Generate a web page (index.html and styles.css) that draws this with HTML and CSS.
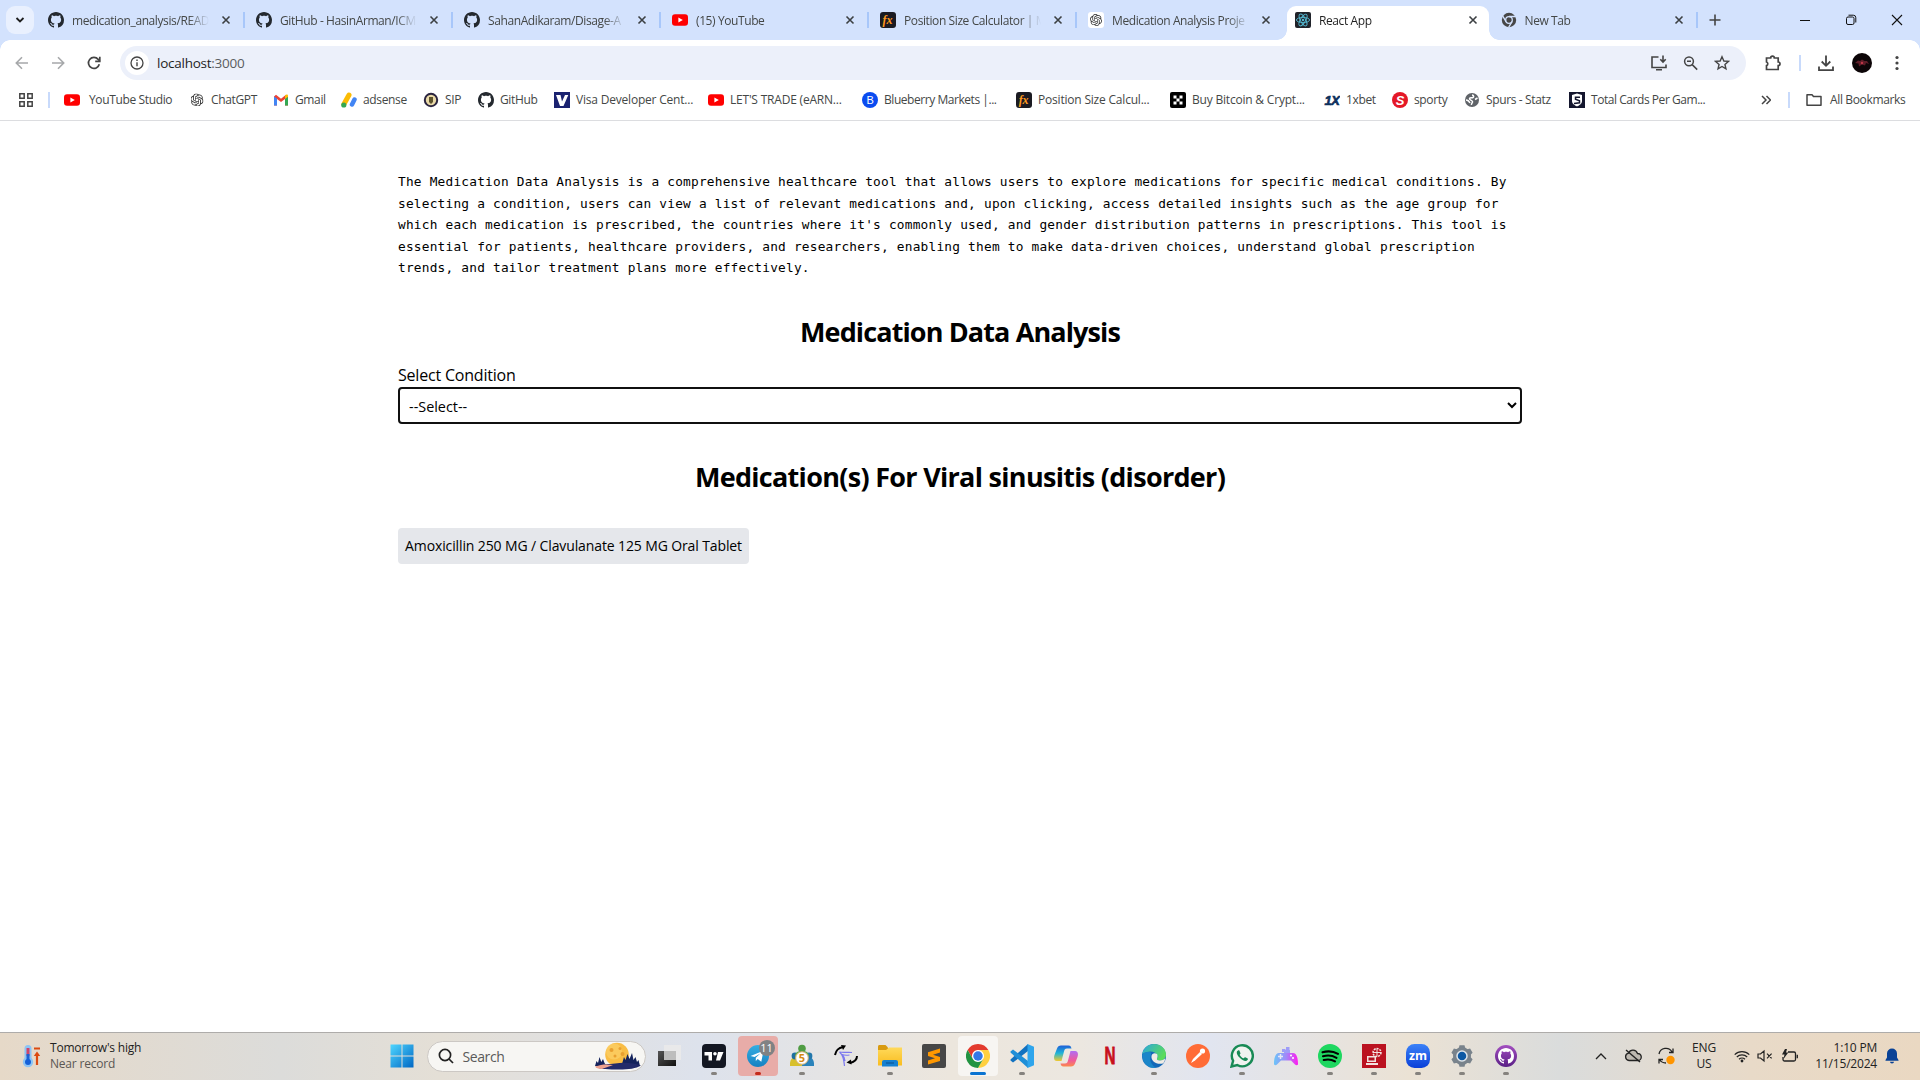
FILE: index.html
```html
<!DOCTYPE html>
<html lang="en"><head><meta charset="utf-8"><title>React App</title>
<link rel="stylesheet" href="styles.css"></head>
<body>
<svg class="defs" aria-hidden="true">
<defs>
<linearGradient id="g-win" x1="0" y1="0" x2="1" y2="1"><stop offset="0" stop-color="#4fd6ff"/><stop offset="1" stop-color="#0067c4"/></linearGradient>
<linearGradient id="g-tg" x1="0" y1="0" x2="0" y2="1"><stop offset="0" stop-color="#37aee2"/><stop offset="1" stop-color="#1681c2"/></linearGradient>
<linearGradient id="g-pad" x1="0" y1="0" x2="1" y2="0"><stop offset="0" stop-color="#6cc4f8"/><stop offset=".5" stop-color="#a08af8"/><stop offset="1" stop-color="#ff1cf0"/></linearGradient>
<linearGradient id="g-edge" x1="0" y1="0" x2="1" y2=".5"><stop offset="0" stop-color="#2aa6e0"/><stop offset="1" stop-color="#5bdc5a"/></linearGradient>
<linearGradient id="g-zm" x1="0" y1="0" x2="0" y2="1"><stop offset="0" stop-color="#3b82f8"/><stop offset="1" stop-color="#0a3fd8"/></linearGradient>
<linearGradient id="g-task" x1="0" y1="0" x2="1" y2="1"><stop offset="0" stop-color="#555"/><stop offset="1" stop-color="#111"/></linearGradient>
<linearGradient id="g-cp1" x1="0" y1="0" x2="0" y2="1"><stop offset="0" stop-color="#1f5fd8"/><stop offset=".5" stop-color="#1fb5d8"/><stop offset="1" stop-color="#f3c92c"/></linearGradient>
<linearGradient id="g-cp2" x1="0" y1="0" x2="0" y2="1"><stop offset="0" stop-color="#b06cf4"/><stop offset=".6" stop-color="#f05a9a"/><stop offset="1" stop-color="#fb8a4c"/></linearGradient>
<linearGradient id="g-gh" x1="0" y1="0" x2="0" y2="1"><stop offset="0" stop-color="#a34fc0"/><stop offset="1" stop-color="#5a1f86"/></linearGradient>
<linearGradient id="g-folder" x1="0" y1="0" x2="0" y2="1"><stop offset="0" stop-color="#ffd95a"/><stop offset="1" stop-color="#f9bd20"/></linearGradient>
<symbol id="github" viewBox="0 0 16 16"><path d="M8 0C3.58 0 0 3.58 0 8c0 3.54 2.29 6.53 5.47 7.59.4.07.55-.17.55-.38 0-.19-.01-.82-.01-1.49-2.01.37-2.53-.49-2.69-.94-.09-.23-.48-.94-.82-1.13-.28-.15-.68-.52-.01-.53.63-.01 1.08.58 1.23.82.72 1.21 1.87.87 2.33.66.07-.52.28-.87.51-1.07-1.78-.2-3.64-.89-3.64-3.95 0-.87.31-1.59.82-2.15-.08-.2-.36-1.02.08-2.12 0 0 .67-.21 2.2.82.64-.18 1.32-.27 2-.27s1.36.09 2 .27c1.53-1.04 2.2-.82 2.2-.82.44 1.1.16 1.92.08 2.12.51.56.82 1.27.82 2.15 0 3.07-1.87 3.75-3.65 3.95.29.25.54.73.54 1.48 0 1.07-.01 1.93-.01 2.2 0 .21.15.46.55.38A8.01 8.01 0 0 0 16 8c0-4.42-3.58-8-8-8z"/></symbol>
<symbol id="youtube" viewBox="0 0 16 16"><rect y="2.2" width="16" height="11.6" rx="3" fill="#f00"/><path d="M6.4 5.4v5.2L10.8 8z" fill="#fff"/></symbol>
<symbol id="openai" viewBox="0 0 24 24"><path d="M22.2819 9.8211a5.9847 5.9847 0 0 0-.5157-4.9108 6.0462 6.0462 0 0 0-6.5098-2.9A6.0651 6.0651 0 0 0 4.9807 4.1818a5.9847 5.9847 0 0 0-3.9977 2.9 6.0462 6.0462 0 0 0 .7427 7.0966 5.98 5.98 0 0 0 .511 4.9107 6.051 6.051 0 0 0 6.5146 2.9001A5.9847 5.9847 0 0 0 13.2599 24a6.0557 6.0557 0 0 0 5.7718-4.2058 5.9894 5.9894 0 0 0 3.9977-2.9001 6.0557 6.0557 0 0 0-.7475-7.0729zm-9.022 12.6081a4.4755 4.4755 0 0 1-2.8764-1.0408l.1419-.0804 4.7783-2.7582a.7948.7948 0 0 0 .3927-.6813v-6.7369l2.02 1.1686a.071.071 0 0 1 .038.052v5.5826a4.504 4.504 0 0 1-4.4945 4.4944zm-9.6607-4.1254a4.4708 4.4708 0 0 1-.5346-3.0137l.142.0852 4.783 2.7582a.7712.7712 0 0 0 .7806 0l5.8428-3.3685v2.3324a.0804.0804 0 0 1-.0332.0615L9.74 19.9502a4.4992 4.4992 0 0 1-6.1408-1.6464zM2.3408 7.8956a4.485 4.485 0 0 1 2.3655-1.9728V11.6a.7664.7664 0 0 0 .3879.6765l5.8144 3.3543-2.0201 1.1685a.0757.0757 0 0 1-.071 0l-4.8303-2.7865A4.504 4.504 0 0 1 2.3408 7.872zm16.5963 3.8558L13.1038 8.364 15.1192 7.2a.0757.0757 0 0 1 .071 0l4.8303 2.7913a4.4944 4.4944 0 0 1-.6765 8.1042v-5.6772a.79.79 0 0 0-.407-.667zm2.0107-3.0231l-.142-.0852-4.7735-2.7818a.7759.7759 0 0 0-.7854 0L9.409 9.2297V6.8974a.0662.0662 0 0 1 .0284-.0615l4.8303-2.7866a4.4992 4.4992 0 0 1 6.6802 4.66zM8.3065 12.863l-2.02-1.1638a.0804.0804 0 0 1-.038-.0567V6.0742a4.4992 4.4992 0 0 1 7.3757-3.4537l-.142.0805L8.704 5.459a.7948.7948 0 0 0-.3927.6813zm1.0976-2.3654l2.602-1.4998 2.6069 1.4998v2.9994l-2.5974 1.4997-2.6067-1.4997Z"/></symbol>
<symbol id="fx" viewBox="0 0 16 16"><rect width="16" height="16" rx="3" fill="#1b1b22"/><text x="7.6" y="12" text-anchor="middle" class="fx-text">fx</text></symbol>
<symbol id="close" viewBox="0 0 10 10"><path d="M1.5 1.5l7 7M8.5 1.5l-7 7" stroke="currentColor" stroke-width="1.6" fill="none"/></symbol>
<symbol id="chrome" viewBox="0 0 48 48"><circle cx="24" cy="24" r="12" fill="#fff"/><path fill="#e33b2e" d="M24,12H44.78a23.99,23.99,0,0,0-41.56,0L13.61,30A11.99,11.99,0,0,1,24,12Z"/><path fill="#ffd040" d="M34.39,30,24,48A23.99,23.99,0,0,0,44.78,12H24A11.99,11.99,0,0,1,34.39,30Z"/><path fill="#229342" d="M13.61,30,3.22,12A23.99,23.99,0,0,0,24,48L34.39,30A11.99,11.99,0,0,1,13.61,30Z"/><circle cx="24" cy="24" r="9.5" fill="#3178e8"/></symbol>
</defs></svg>

<div class="browser">
<header class="tabstrip">
  <div class="tab-search"><svg width="10" height="10" viewBox="0 0 10 10"><path d="M1.500 3L5 6.500 8.500 3" fill="none" stroke="#1f1f1f" stroke-width="1.800"/></svg></div>
  <div class="tab"><svg class="fav dark"><use href="#github"/></svg><span class="title">medication_analysis/READ</span><svg class="x"><use href="#close"/></svg></div>
  <div class="tab"><svg class="fav dark"><use href="#github"/></svg><span class="title">GitHub - HasinArman/ICM</span><svg class="x"><use href="#close"/></svg></div>
  <div class="tab"><svg class="fav dark"><use href="#github"/></svg><span class="title">SahanAdikaram/Disage-A</span><svg class="x"><use href="#close"/></svg></div>
  <div class="tab"><svg class="fav"><use href="#youtube"/></svg><span class="title">(15) YouTube</span><svg class="x"><use href="#close"/></svg></div>
  <div class="tab"><svg class="fav"><use href="#fx"/></svg><span class="title">Position Size Calculator | M</span><svg class="x"><use href="#close"/></svg></div>
  <div class="tab last"><svg class="fav gpt-tab"><use href="#openai"/></svg><span class="title">Medication Analysis Proje</span><svg class="x"><use href="#close"/></svg></div>
  <div class="tab active"><svg class="fav" viewBox="0 0 16 16"><rect width="16" height="16" rx="2" fill="#20232a"/><g fill="none" stroke="#53b8d0" stroke-width=".9"><ellipse cx="8" cy="8" rx="6.6" ry="2.6"/><ellipse cx="8" cy="8" rx="6.6" ry="2.6" transform="rotate(60 8 8)"/><ellipse cx="8" cy="8" rx="6.6" ry="2.6" transform="rotate(120 8 8)"/></g><circle cx="8" cy="8" r="1.2" fill="#53b8d0"/></svg><span class="title">React App</span><svg class="x"><use href="#close"/></svg></div>
  <div class="tab"><svg class="fav" viewBox="0 0 16 16"><circle cx="8" cy="8" r="7.200" fill="#474747"/><circle cx="8" cy="8" r="3.300" fill="none" stroke="#d3e2fd" stroke-width="1.300"/><path d="M8 4.500h7M5 9.700L1.500 3.700M11 9.700L7.600 15.400" stroke="#d3e2fd" stroke-width="1.300"/></svg><span class="title">New Tab</span><svg class="x"><use href="#close"/></svg></div>
  <svg class="plus" width="12" height="12" viewBox="0 0 12 12"><path d="M6 .5v11M.5 6h11" stroke="#444" stroke-width="1.600"/></svg>
  <div class="window-controls">
    <svg width="12" height="12" viewBox="0 0 12 12"><path d="M1 6.500h10" stroke="#111"/></svg>
    <svg width="12" height="12" viewBox="0 0 12 12" fill="none" stroke="#111"><rect x="1.500" y="3" width="7.500" height="7.500" rx="1.500"/><path d="M3.500 1.200h4.800a2.500 2.500 0 0 1 2.500 2.500v4.800"/></svg>
    <svg width="12" height="12" viewBox="0 0 12 12"><path d="M1 1l10 10M11 1L1 11" stroke="#111" stroke-width="1.100"/></svg>
  </div>
</header>

<nav class="toolbar">
  <div class="nav-buttons">
    <svg width="14" height="14" viewBox="0 0 14 14" fill="none" stroke="#a6a8aa" stroke-width="1.600"><path d="M13 7H1.500M7 1.300L1.300 7 7 12.700"/></svg>
    <svg width="14" height="14" viewBox="0 0 14 14" fill="none" stroke="#a6a8aa" stroke-width="1.600"><path d="M1 7h11.500M7 1.300L12.700 7 7 12.700"/></svg>
    <svg width="14" height="14" viewBox="0 0 14 14" fill="none" stroke="#444" stroke-width="1.700"><path d="M12.300 8.300A5.500 5.500 0 1 1 11.200 3.400L12.700 5"/><path d="M12.800.8v4.600H8.200"/></svg>
  </div>
  <div class="omnibox">
    <span class="info"><svg width="14" height="14" viewBox="0 0 14 14"><circle cx="7" cy="7" r="6" fill="none" stroke="#444" stroke-width="1.300"/><path d="M7 6.200v4M7 3.500v1.500" stroke="#444" stroke-width="1.400"/></svg></span>
    <span class="url">localhost<i>:3000</i></span>
    <div class="omni-actions">
      <svg width="18" height="18" viewBox="0 0 18 18" fill="none" stroke="#444" stroke-width="1.600"><path d="M8.500 3H2v10.500h14V10.500M6 15.700h6M13 1.500v6M10.300 5.200L13 8l2.700-2.800"/></svg>
      <svg width="16" height="16" viewBox="0 0 16 16" fill="none" stroke="#444" stroke-width="1.500"><circle cx="6" cy="6.300" r="4.400"/><path d="M9.200 9.600l5 5M4 6.300h4"/></svg>
      <svg width="16" height="16" viewBox="0 0 16 16" fill="none" stroke="#444" stroke-width="1.400"><path d="M8 1.800l1.850 4.200 4.500.4-3.400 3 1 4.500L8 11.500l-3.950 2.400 1-4.500-3.400-3 4.500-.4z"/></svg>
    </div>
  </div>
  <div class="tool-actions">
    <svg width="18" height="18" viewBox="0 0 18 18" fill="none" stroke="#444" stroke-width="1.700"><path d="M2.500 4h4.200a1.800 1.800 0 0 1 3.600 0h3.900v4a1.800 1.800 0 0 1 0 3.600v3.900H2.500v-3.900a1.900 1.900 0 0 0 0-3.600z"/></svg>
    <span class="divider"></span>
    <svg width="18" height="18" viewBox="0 0 18 18" fill="none" stroke="#444" stroke-width="1.800"><path d="M9 1.500v10M4.700 7.500L9 11.800l4.300-4.300M2 12.500v3.600h14v-3.600"/></svg>
    <svg width="20" height="20" viewBox="0 0 20 20"><circle cx="10" cy="10" r="10" fill="#0c0507"/><path d="M3 10l3-2.500 2 .5 2-1.500 2.500 1.500L15 8l2 3-3-1-1 2.500-3-1-3 2-.5-3z" fill="#5f1d28"/><circle cx="10" cy="10" r="1.200" fill="#c03848"/></svg>
    <svg width="4" height="16" viewBox="0 0 4 16" fill="#444"><circle cx="2" cy="2.500" r="1.600"/><circle cx="2" cy="8" r="1.600"/><circle cx="2" cy="13.500" r="1.600"/></svg>
  </div>
</nav>

<nav class="bookmarks">
  <svg class="apps" width="16" height="16" viewBox="0 0 16 16" fill="none" stroke="#444" stroke-width="1.500"><path d="M1.800 1.800h4.400v4.400H1.800zM9.800 1.800h4.400v4.400H9.800zM1.800 9.800h4.400v4.400H1.800zM9.800 9.800h4.400v4.400H9.800z"/></svg>
  <span class="divider"></span>
  <a class="wide"><svg class="fav"><use href="#youtube"/></svg><span>YouTube Studio</span></a>
  <a><svg class="fav gpt"><use href="#openai"/></svg><span>ChatGPT</span></a>
  <a><svg class="fav" viewBox="0 0 16 16"><path d="M1 4.500v9h3V7l4 3 4-3v6.500h3v-9L13 2.800 8 6.700 3 2.800z" fill="#ea4335"/><path d="M1 4.500v9h3V6.500z" fill="#4285f4"/><path d="M15 4.500v9h-3V6.500z" fill="#34a853"/><path d="M12 3.600V7l3-2.300V4c0-1.600-1.600-2-3-.4z" fill="#fbbc04"/></svg><span>Gmail</span></a>
  <a><svg class="fav" viewBox="0 0 16 16"><path d="M8 3L3 12" stroke="#fbbc04" stroke-width="5" stroke-linecap="round"/><path d="M13.500 7.500L11 12.500" stroke="#4285f4" stroke-width="4.500" stroke-linecap="round"/><circle cx="2.800" cy="13" r="2.600" fill="#34a853"/></svg><span>adsense</span></a>
  <a><svg class="fav" viewBox="0 0 16 16"><circle cx="8" cy="8" r="6.200" fill="#e9d9a8" stroke="#2b2540" stroke-width="2"/><path d="M6 5h4v5l-2 2-2-2z" fill="#5c522c"/></svg><span>SIP</span></a>
  <a><svg class="fav dark"><use href="#github"/></svg><span>GitHub</span></a>
  <a class="long"><svg class="fav" viewBox="0 0 16 16"><path d="M0 0h16v16H0z" fill="#1a2270"/><path d="M2 3h4.500L8 9.500 11 3h3.300L9.500 14H6z" fill="#fff"/></svg><span>Visa Developer Cent...</span></a>
  <a class="long"><svg class="fav"><use href="#youtube"/></svg><span>LET'S TRADE (eARN...</span></a>
  <a class="tight"><svg class="fav" viewBox="0 0 16 16"><circle cx="8" cy="8" r="8" fill="#0a4bf0"/><text x="8" y="12" text-anchor="middle" class="b-text">B</text></svg><span>Blueberry Markets |...</span></a>
  <a class="long"><svg class="fav"><use href="#fx"/></svg><span>Position Size Calcul...</span></a>
  <a class="long"><svg class="fav" viewBox="0 0 16 16"><rect width="16" height="16" rx="2" fill="#000"/><path d="M3.500 3.500h3v3h-3zM9.500 3.500h3v3h-3zM6.500 6.500h3v3h-3zM3.500 9.500h3v3h-3zM9.500 9.500h3v3h-3z" fill="#fff"/></svg><span>Buy Bitcoin &amp; Crypt...</span></a>
  <a><svg class="fav" viewBox="0 0 16 16"><text x="8" y="12.500" text-anchor="middle" class="xbet-text" textLength="15" lengthAdjust="spacingAndGlyphs">1X</text></svg><span>1xbet</span></a>
  <a><svg class="fav" viewBox="0 0 16 16"><circle cx="8" cy="8" r="8" fill="#e41827"/><text x="8" y="12.500" text-anchor="middle" class="s-text">S</text></svg><span>sporty</span></a>
  <a><svg class="fav" viewBox="0 0 16 16"><circle cx="8" cy="8" r="7" fill="#5f6368"/><path d="M8 3c2 0 2 2 1 2.500S6 5 5.500 6.500 8 8 8.500 9.500 7 11 7.500 13M2 8c2 0 3 1 4 3M13.500 6L11 7.500" stroke="#fff" stroke-width="1.500" fill="none"/></svg><span>Spurs - Statz</span></a>
  <a class="tight"><svg class="fav" viewBox="0 0 16 16"><path d="M0 0h16v16H0z" fill="#14162e"/><path d="M3 3l5-1.500L13 3v6c0 3-3 4.500-5 5.500-2-1-5-2.500-5-5.500z" fill="#fff"/><path d="M11 5.300H6.500v2l4 1.500v2L5 11.500" fill="none" stroke="#14162e" stroke-width="1.500"/></svg><span>Total Cards Per Gam...</span></a>
  <svg class="more" width="10" height="10" viewBox="0 0 10 10" fill="none" stroke="#444" stroke-width="1.500"><path d="M1 1l4 4-4 4M5.500 1l4 4-4 4"/></svg>
  <span class="divider"></span>
  <a><svg class="fav" viewBox="0 0 16 16"><path d="M1 13.300V2.700h5l1.500 1.800H15v8.800z" fill="none" stroke="#444" stroke-width="1.500" stroke-linejoin="round"/></svg><span>All Bookmarks</span></a>
</nav>

<main class="page">
  <div class="container">
    <p class="intro">The Medication Data Analysis is a comprehensive healthcare tool that allows users to explore medications for specific medical conditions. By selecting a condition, users can view a list of relevant medications and, upon clicking, access detailed insights such as the age group for which each medication is prescribed, the countries where it's commonly used, and gender distribution patterns in prescriptions. This tool is essential for patients, healthcare providers, and researchers, enabling them to make data-driven choices, understand global prescription trends, and tailor treatment plans more effectively.</p>
    <h1>Medication Data Analysis</h1>
    <label for="condition">Select Condition</label>
    <select id="condition"><option>--Select--</option></select>
    <h2>Medication(s) For Viral sinusitis (disorder)</h2>
    <button class="med">Amoxicillin 250 MG / Clavulanate 125 MG Oral Tablet</button>
  </div>
</main>
</div>

<footer class="taskbar">
  <div class="weather">
    <svg width="20" height="24" viewBox="0 0 20 24"><rect x="3.500" y="1" width="7" height="17" rx="3.500" fill="#8cc4f5"/><circle cx="7" cy="18" r="5.200" fill="#8cc4f5"/><path d="M7 4v8" stroke="#d04468" stroke-width="3"/><path d="M7 10v7" stroke="#1f60d0" stroke-width="3"/><circle cx="7" cy="18" r="3" fill="#1560d8"/><path d="M13 4.500h6M16 21V9" stroke="#dc4a10" stroke-width="2.200"/><path d="M12.800 12L16 7.500l3.200 4.500z" fill="#dc4a10"/></svg>
    <div><b>Tomorrow's high</b><em>Near record</em></div>
  </div>
  <div class="apps-row">
    <svg class="win" viewBox="0 0 24 24"><path fill="url(#g-win)" d="M.5.500h11v11H.5zM12.500.500h11v11h-11zM.5 12.500h11v11H.5zM12.500 12.500h11v11h-11z"/></svg>
    <div class="search"><svg width="16" height="16" viewBox="0 0 16 16" fill="none" stroke="#222" stroke-width="1.700"><circle cx="7" cy="7" r="5.600"/><path d="M11 11l4 4"/></svg><span>Search</span>
      <svg class="moon" width="46" height="28" viewBox="0 0 46 28"><circle cx="22" cy="12.500" r="11.800" fill="#f9bd45"/><circle cx="19" cy="9.500" r="8" fill="#fcd068" opacity=".7"/><g fill="#e9a030"><circle cx="16.500" cy="8" r="2"/><circle cx="25" cy="6.500" r="1.500"/><circle cx="20" cy="14" r="1.500"/><circle cx="27.500" cy="12" r="2"/></g><path d="M0 24l1.500-5 1.500 2 1.500-6 1.800 5 1.700-3 1.500 4 2 3zM27 22l2-7 1.500 3 2-6 2 5 2.500-6 1.500 7 2-3 1.500 5 1.500-2 1.500 6z" fill="#15235c"/><path d="M1 25c7-3.500 13-2.500 19-3.500 10-1.500 18-.5 26 2-5 3-12 4-22 4s-19 0-23-2.500z" fill="#232b6a"/><path d="M0 24.500c7-2.500 12-2.500 18-1.500-3 1.500-8 2.500-11 4-4 0-6-1-7-2.500z" fill="#efa28e"/></svg></div>
    <div class="app"><svg viewBox="0 0 24 24"><path fill="url(#g-task)" d="M0 7h18v15H0z"/><path fill="#e9e9ea" d="M6 1h17v15H6z"/><path fill="#bdbdbd" d="M6 7h12v9H6z"/></svg></div>
    <div class="app run"><svg viewBox="0 0 24 24"><rect width="24" height="24" rx="4" fill="#131722"/><path fill="#fff" d="M2.500 8h7.500v8.500H6.500v-5h-4zM16 8h5.500L18 16.500h-4z"/><circle cx="13" cy="9.800" r="1.800" fill="#fff"/></svg></div>
    <div class="app run tg"><svg viewBox="0 0 24 24"><circle cx="12" cy="12" r="11" fill="url(#g-tg)"/><path d="M4.500 12l13-5.300-2.200 11-3.600-2.700-1.900 1.900v-3.200l4.500-4.300-5.800 3.700z" fill="#fff"/></svg><span class="badge">11</span></div>
    <div class="app run"><svg viewBox="0 0 24 24"><path d="M0 22c-.5-6 2-9 6-9s6 3 6 9z" fill="#d8c02c"/><path d="M12 22c0-6 2-9 6-9s6.500 3 6 9z" fill="#2a83bb"/><circle cx="5" cy="12" r="3.400" fill="#1e70a0"/><circle cx="19" cy="12" r="3.400" fill="#2377ac"/><path d="M5 12c0-7 14-7 14 0z" fill="#5eaa4e"/><circle cx="12" cy="4.500" r="3.800" fill="#4f9c43"/><circle cx="12" cy="14" r="6.300" fill="#fff" stroke="#d5b070"/><text x="12" y="18.200" text-anchor="middle" class="five">5</text></svg></div>
    <div class="app"><svg viewBox="0 0 24 24"><path d="M1 11c1-5 3-7 8-8" stroke="#000" stroke-width="2" fill="none"/><path d="M7 1l5 .5-3 4.500z"/><path d="M23 12c0 4-3 6-7 7" stroke="#000" stroke-width="2" fill="none"/><path d="M17 15.500l-4.500 3 5 2z"/><path d="M18 8.500c-5-.5-9 .5-12.500-.5C9 11 10 15 10.500 22M15.500 11c-3.500.5-5 .5-7.500-.5 2.500 2.500 3 4 3 6.500" stroke="#7b78ee" stroke-width="1.200" fill="none"/></svg></div>
    <div class="app run"><svg viewBox="0 0 24 24"><path d="M0 2.500C0 1.600.6 1 1.500 1h6L10 3.500V6H0z" fill="#d99b10"/><path d="M0 6h8l3-2.500h13V21.500H0z" fill="url(#g-folder)"/><path d="M4 22.500V18a2 2 0 0 1 2-2h12a2 2 0 0 1 2 2v4.500z" fill="#1580d0"/><path d="M8 19h8" stroke="#0d5ca0" stroke-width="1.400"/></svg></div>
    <div class="app"><svg viewBox="0 0 24 24"><rect width="24" height="24" rx="2" fill="#474747"/><path d="M6 8.200L18 4.500v4L11 10.700l7 2.200v4L6 20.500v-4l7-2.200-7-2.200z" fill="#ff9800"/></svg></div>
    <div class="app run current"><svg><use href="#chrome"/></svg></div>
    <div class="app run"><svg viewBox="0 0 24 24"><path d="M18 0v7L3 18.500 0.500 16.500v-1z" fill="#1272c0"/><path d="M18 24v-7L3 5.500.5 7.500v1z" fill="#1f8fd8"/><path d="M17.500 0L24 2.800v18.400L17.500 24z" fill="#2fa5ec"/></svg></div>
    <div class="app"><svg viewBox="0 0 24 24"><path d="M7 1.500h7.500c2 0 2.500 1 3 3H13c-2 0-2.500 1-3 3L7.500 17H3c-3 0-3.500-3-2.500-6L3 4.500C3.700 2.500 5 1.500 7 1.500z" fill="url(#g-cp1)"/><path d="M17 22.500H9.500c-2 0-2.500-1-3-3H11c2 0 2.500-1 3-3L16.500 7H21c3 0 3.500 3 2.500 6L21 19.500c-.7 2-2 3-4 3z" fill="url(#g-cp2)"/></svg></div>
    <div class="app"><svg viewBox="0 0 24 24"><text x="12" y="20" text-anchor="middle" class="n-text" textLength="11" lengthAdjust="spacingAndGlyphs">N</text></svg></div>
    <div class="app run"><svg viewBox="0 0 24 24"><circle cx="12" cy="12" r="12" fill="#1468b8"/><path d="M.2 10C1.500 4 6 0 12 0c7 0 12 5 12 10.500 0 4-3 6-6 6-2.500 0-3.500-1-3-2 .7-1 1-2 0-4-1.500-2.500-7-5-14.800-.5z" fill="url(#g-edge)"/><path d="M9 11c-2 5 0 10 5 12.800C5 25 .5 18 .2 12 0 9 5 7 9 8.500z" fill="#1e93d0" opacity=".7"/><path d="M9.500 12c.5-2.500 3-3.500 5.500-2 .8 1.200.8 3 0 4.500-.5 1 .5 2 3 2 2 0 3.700-.8 4.800-2 .5 1.500-.2 3.500-1.800 5-3 .5-7 .5-9.500-2-1.500-1.500-2.300-3.500-2-5.500z" fill="#f0ece5"/></svg></div>
    <div class="app"><svg viewBox="0 0 24 24"><circle cx="12" cy="12" r="12" fill="#ff6c37"/><circle cx="16.500" cy="7" r="2.600" fill="#fff"/><path d="M14 8l2 2-7 6.500-4 2.500 2-4z" fill="#fff"/></svg></div>
    <div class="app run"><svg viewBox="0 0 24 24"><path d="M1.500 22.500l1.600-5.700A10.500 10.500 0 1 1 7.300 21z" fill="#f0f3ef" stroke="#188a55" stroke-width="2.400"/><path d="M8 6.500c-2 1-1.500 4 1.500 7s6.500 4.500 8 2.500c.7-1 .4-1.500-.2-1.800l-2-1c-1-.3-1.200 1.200-2 1-1.600-.6-3-2-3.600-3.500.8-.9 1-1 .6-1.900l-.8-2c-.3-.6-1-.6-1.500-.3z" fill="#188a55"/></svg></div>
    <div class="app"><svg viewBox="0 0 24 24"><path d="M5 9h14c4 0 5 6 5 11 0 1.500-2 1.500-3 .5l-4-4H7l-4 4c-1 1-3 1-3-.5C0 15 1 9 5 9z" fill="url(#g-pad)"/><path d="M8 5h3.500v3H8zM12 3h3.500v3H12zM10 6h6v3h-6z" fill="#9e9df8"/><path d="M4 12.500h5M6.500 10v5" stroke="#e7e7f3" stroke-width="1.500"/><circle cx="17" cy="11.500" r="1" fill="#fff"/><circle cx="19" cy="14" r="1" fill="#fff"/></svg></div>
    <div class="app run"><svg viewBox="0 0 24 24"><circle cx="12" cy="12" r="12" fill="#1ed760"/><path d="M4.500 8.300c5-1.500 11-1 15.500 1.500M5 12.300c4.500-1.300 9.500-.8 13.500 1.500M5.700 16c4-1 8-.6 11.300 1.300" stroke="#000" stroke-width="2.100" stroke-linecap="round" fill="none"/></svg></div>
    <div class="app run"><svg viewBox="0 0 24 24"><path d="M0 0h24v24H0z" fill="#bb1220"/><path d="M5 12h9v6H5zM4 19h12v2H4z" fill="#f3e1df"/><path d="M6.500 13.500h6v3h-6z" fill="#b01020"/><circle cx="15" cy="8.500" r="4" fill="none" stroke="#f3e1df" stroke-width="1.500" stroke-dasharray="2 1"/><path d="M15 4.500v8M11 8.500h8" stroke="#f3e1df"/></svg></div>
    <div class="app run"><svg viewBox="0 0 24 24"><rect width="24" height="24" rx="8.500" fill="url(#g-zm)"/><text x="12" y="15.500" text-anchor="middle" class="zm" textLength="18" lengthAdjust="spacingAndGlyphs">zm</text></svg></div>
    <div class="app run"><svg viewBox="0 0 24 24"><g fill="#79838c"><circle cx="12" cy="12" r="9"/><path id="tooth" d="M9.500 1.200h5l1 4h-7zM9.500 22.800h5l1-4h-7z"/><use href="#tooth" transform="rotate(60 12 12)"/><use href="#tooth" transform="rotate(120 12 12)"/></g><circle cx="12" cy="12" r="5" fill="#0c58a4" stroke="#dfe5ea" stroke-width="1.500"/></svg></div>
    <div class="app run"><svg viewBox="0 0 24 24"><circle cx="12" cy="12" r="11" fill="url(#g-gh)"/><svg x="4" y="4" width="16" height="16" fill="#fff"><use href="#github"/></svg></svg></div>
  </div>
  <div class="tray">
    <svg class="chev" width="12" height="12" viewBox="0 0 12 12" fill="none" stroke="#222" stroke-width="1.300"><path d="M1 9l5-5 5 5"/></svg>
    <svg class="cloud" width="18" height="14" viewBox="0 0 18 14"><path d="M5 11.500a3.700 3.700 0 0 1-.5-7.300 4.800 4.800 0 0 1 9 .3 3.500 3.500 0 0 1 .5 7z" fill="#bdb8b0" stroke="#222" stroke-width="1.300"/><path d="M2 1l14 12" stroke="#222" stroke-width="1.400"/></svg>
    <svg class="sync" width="18" height="18" viewBox="0 0 18 18" fill="none" stroke="#222" stroke-width="1.300"><path d="M2 7a7 7 0 0 1 13-2M16 1.500V5.500h-4M9 16c-3 0-5-1-6.500-3.500M2 16.500V12.500h4"/><circle cx="13.500" cy="13" r="4.200" fill="#ff9500" stroke="none"/></svg>
    <div class="lang"><span>ENG</span><span>US</span></div>
    <svg class="wifi" width="16" height="14" viewBox="0 0 16 14" fill="none" stroke="#222" stroke-width="1.200"><path d="M.7 5.700a10.300 10.300 0 0 1 14.600 0M2.800 8a7.300 7.300 0 0 1 10.400 0M5 10.300a4.300 4.300 0 0 1 6 0"/><circle cx="8" cy="12" r="1.400" fill="#222" stroke="none"/></svg>
    <svg class="vol" width="16" height="14" viewBox="0 0 16 14" fill="none" stroke="#222" stroke-width="1.200"><path d="M1 5v4h2.500L7 12V2L3.500 5zM10 4.700l4.600 4.600M14.600 4.700L10 9.300"/></svg>
    <svg class="bat" width="18" height="16" viewBox="0 0 18 16" fill="none" stroke="#222" stroke-width="1.300"><path d="M7 4h6a1.500 1.500 0 0 1 1.500 1.500v6a1.500 1.500 0 0 1-1.500 1.500H3.500A1.500 1.500 0 0 1 2 11.500V9M16.300 6.800v3.400"/><path d="M4 1L1 6.500h2.500L2.500 11l4.800-6.500H5L6 1z" fill="#222" stroke="none"/></svg>
    <div class="clock"><span>1:10 PM</span><span>11/15/2024</span></div>
    <svg class="bell" width="14" height="16" viewBox="0 0 14 16" fill="#0a4296"><path d="M7 .5a5 5 0 0 0-5 5v4L.5 12v.8h13V12L12 9.500v-4a5 5 0 0 0-5-5zM5 13.800a2 1.700 0 0 0 4 0z"/></svg>
  </div>
</footer>
</body></html>
```

FILE: styles.css
```css
* { box-sizing: border-box; }
body { margin: 0; height: 1080px; display: flex; flex-direction: column; overflow: hidden; background: #fff; font-family: "Open Sans", "Noto Sans", sans-serif; }
svg { display: block; flex: none; }
.defs { position: absolute; width: 0; height: 0; }
.browser { flex: 1; display: flex; flex-direction: column; }
.fav { width: 16px; height: 16px; }
.dark { fill: #24292f; }
.divider { width: 2px; height: 16px; background: #c8dafb; flex: none; }
.fx-text { font: italic bold 12px "Liberation Serif", serif; fill: #ff9a1f; }
.b-text { font: 11px "Liberation Sans", sans-serif; fill: #fff; }
.s-text { font: italic bold 13px "Liberation Sans", sans-serif; fill: #fff; }
.xbet-text { font: italic bold 12px "Liberation Sans", sans-serif; fill: #0c2f5c; stroke: #0c2f5c; stroke-width: 0.6px; }

/* tab strip */
.tabstrip { height: 40px; background: #d3e2fd; display: flex; align-items: flex-start; padding-left: 6px; }
.tab-search { width: 28px; height: 28px; margin-top: 6px; border-radius: 9px; background: #e9f0fe; display: grid; place-items: center; margin-right: 4px; }
.tab { position: relative; width: 208px; height: 34px; margin-top: 6px; padding: 0 12px 6px 10px; display: flex; align-items: center; flex: none; color: #444746; }
.tab::after { content: ""; position: absolute; right: 1px; top: 6px; width: 2px; height: 16px; background: #a8c7fa; }
.tab.last::after, .tab.active::after { display: none; }
.title { width: 139px; margin: 2px 0 0 8px; white-space: nowrap; font-size: 12px; letter-spacing: -0.4px; line-height: 18px; mask-image: linear-gradient(90deg, #000 116px, transparent 137px); }
.x { width: 10px; height: 10px; margin-left: 10px; color: #3c4043; }
.gpt-tab { background: #fff; border-radius: 3px; padding: 2px; fill: #333; }
.active { background: #fff; border-radius: 9px 9px 0 0; color: #1f1f1f; margin-left: 1px; width: 201.5px; margin-right: 2px; padding-left: 8px; padding-right: 11px; }
.active::before { content: ""; position: absolute; left: -10px; right: -10px; bottom: 0; height: 10px; background: radial-gradient(circle at 0 0, transparent 9.5px, #fff 10px) left / 10px 10px no-repeat, radial-gradient(circle at 100% 0, transparent 9.5px, #fff 10px) right / 10px 10px no-repeat; }
.plus { margin: 14px 0 0 10px; }
.window-controls { display: flex; gap: 34px; margin: 14px 17px 0 auto; }

/* toolbar */
.toolbar { height: 46px; display: flex; align-items: center; background: radial-gradient(circle at 10px 10px, transparent 9.5px, #d3e2fd 10px) left top / 10px 10px no-repeat, radial-gradient(circle at 0 10px, transparent 9.5px, #d3e2fd 10px) right top / 10px 10px no-repeat, #fff; }
.nav-buttons { display: flex; gap: 22px; width: 120px; padding-left: 15px; }
.omnibox { width: 1626px; height: 34px; border-radius: 17px; background: #ecf0fa; display: flex; align-items: center; padding: 0 16px 0 5px; }
.info { width: 24px; height: 24px; border-radius: 50%; background: #fff; display: grid; place-items: center; }
.url { font-size: 13.5px; letter-spacing: -0.25px; margin-left: 8px; color: #1f1f1f; }
.url i { font-style: normal; color: #5a5d61; }
.omni-actions { display: flex; gap: 15px; align-items: center; margin-left: auto; }
.tool-actions { display: flex; align-items: center; padding-left: 18px; gap: 16.5px; }
.tool-actions svg:last-child { margin-left: 7px; }

/* bookmarks */
.bookmarks { height: 35px; border-bottom: 1px solid #dcdde0; display: grid; align-items: center; padding: 0 0 7px 18px; font-size: 12px; letter-spacing: -0.36px; color: #444746;
  grid-template-columns: 30px 16px 125px 84px 68px 82px 55px 76px 154px 154px 154px 154px 154px 68px 72px 105px 192px 27px 18px 1fr; }
.bookmarks a { display: flex; align-items: center; gap: 6px; white-space: nowrap; }
.bookmarks a.wide { gap: 9px; }
.bookmarks a:last-child { gap: 8px; }
.long { letter-spacing: -0.2px; }
.tight { letter-spacing: -0.45px; }
.gpt { fill: #333; padding: 1.5px; }

/* page */
.page { flex: 1; }
.container { width: 1124px; margin: 0 auto; padding-top: 50px; }
.intro { margin: 0; font: 12.8px/21.6px "DejaVu Sans Mono", monospace; letter-spacing: 0.214px; color: #000; }
h1, h2 { margin: 0; text-align: center; font-size: 27px; line-height: 32px; font-weight: 700; }
h1 { padding-top: 37px; letter-spacing: -0.88px; }
label { display: block; margin: 16px 0 1px; font-size: 16px; line-height: 22px; letter-spacing: -0.2px; }
select { display: block; width: 100%; height: 37px; border: 2px solid #101010; border-radius: 4px; background: #fff; padding: 4px 5px 2px; font: 14.4px "Open Sans", sans-serif; color: #000; outline: 0; }
h2 { margin-top: 37px; letter-spacing: -0.7px; }
.med { display: block; margin-top: 35px; height: 36px; width: 351px; border: 0; border-radius: 4px; background: #e5e7eb; font: 14px "Open Sans", sans-serif; letter-spacing: -0.12px; padding: 0; white-space: nowrap; color: #000; }

/* taskbar */
.taskbar { height: 48px; flex: none; border-top: 1px solid #aeacaa; display: flex; font-size: 12px; color: #222;
  background: linear-gradient(90deg, #e6d9c8 0, #dcdcda 280px, #e4dfd6 440px, #dde2ec 700px, #ece6dd 950px, #ece7e0 1080px, #e1e5f0 1210px, #ebe2d4 1410px, #dadcdc 1560px, #e8dac8 1750px, #ead8c2 100%); }
.weather { width: 380px; display: flex; padding: 11px 0 0 21px; gap: 9px; }
.weather div { display: flex; flex-direction: column; margin-top: -4px; }
.weather b, .weather em { font-weight: 400; font-style: normal; line-height: 16px; letter-spacing: -0.2px; }
.weather em { color: #5a5754; }
.apps-row { display: flex; align-items: center; padding: 0 0 1px 9.5px; }
.win { width: 24px; height: 24px; }
.search { width: 219px; height: 31px; margin: 0 2px 0 13px; border-radius: 16px; background: #f7f6f3; border: 1px solid #ccc8c4; display: flex; align-items: center; padding: 0 4px 0 10px; font-size: 14px; color: #5a5a5a; gap: 9px; letter-spacing: -0.4px; }
.moon { margin-left: auto; }
.app { position: relative; width: 40px; height: 40px; margin: 0 2px; border-radius: 4px; display: grid; place-items: center; }
.app > svg { width: 24px; height: 24px; }
.run::after { content: ""; position: absolute; left: 17px; bottom: 1px; width: 6px; height: 3px; border-radius: 2px; background: #85827e; }
.tg { background: #e8aca8; }
.tg::after { background: #c42b1c; }
.current { background: #f7f5f2; }
.current::after { width: 16px; left: 12px; background: #0b74d1; }
.badge { position: absolute; left: 21px; top: 4px; width: 16px; height: 16px; border-radius: 50%; background: #808284; color: #fff; font-size: 11px; line-height: 16px; text-align: center; }
.five { font: bold 11px "Open Sans", sans-serif; fill: #d58a10; }
.n-text { font: bold 23px "Liberation Sans", sans-serif; fill: #c8101c; stroke: #c8101c; stroke-width: 0.8px; }
.zm { font: bold 12px "Open Sans", sans-serif; fill: #fff; }
.tray { margin-left: auto; display: flex; align-items: center; padding: 0 21px 1px 0; }
.cloud { margin-left: 17px; }
.sync { margin-left: 15px; }
.lang, .clock { display: flex; flex-direction: column; line-height: 16px; letter-spacing: -0.2px; }
.lang { width: 30px; text-align: center; margin-left: 14px; }
.wifi { margin-left: 15px; }
.vol { margin-left: 7px; }
.bat { margin-left: 8px; }
.clock { width: 78px; text-align: right; }
.bell { margin-left: 8px; }
```
